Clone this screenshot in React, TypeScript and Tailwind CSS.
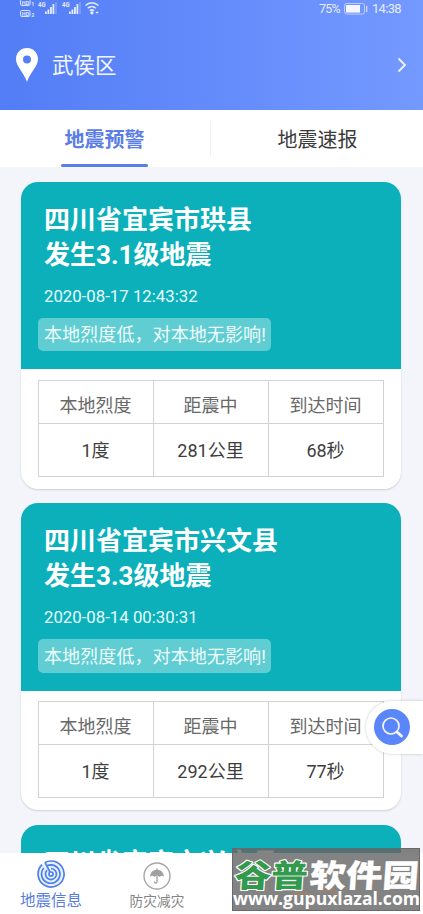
import React from "react";

type Quake = {
  place: string;
  level: string;
  time: string;
  distance: string;
  arrival: string;
};

const quakes: Quake[] = [
  { place: "四川省宜宾市珙县", level: "发生3.1级地震", time: "2020-08-17 12:43:32", distance: "281公里", arrival: "68秒" },
  { place: "四川省宜宾市兴文县", level: "发生3.3级地震", time: "2020-08-14 00:30:31", distance: "292公里", arrival: "77秒" },
];

function Signal() {
  return (
    <svg width="21" height="14" viewBox="0 0 21 14" fill="#e6ecff">
      <text x="0" y="6" fontSize="6.8" fontWeight="700" fontFamily="Roboto" textLength="7.5" lengthAdjust="spacingAndGlyphs">4G</text>
      <rect x="7" y="10.5" width="1.8" height="2.5" />
      <rect x="9.5" y="8.5" width="1.8" height="4.5" />
      <rect x="12" y="6" width="1.8" height="7" />
      <rect x="14.5" y="3" width="1.8" height="10" />
      <rect x="17.4" y="1" width="1.2" height="12" opacity=".35" />
    </svg>
  );
}

function HdMark() {
  return (
    <svg width="16" height="17" viewBox="0 0 16 17" fontFamily="Roboto" fontWeight="700">
      <g fill="none" stroke="#dce5ff" strokeWidth="1">
        <rect x=".5" y="-1" width="9.5" height="6.5" rx="1.2" />
        <rect x=".5" y="10.5" width="9.5" height="6" rx="1.2" />
      </g>
      <g fill="#dce5ff">
        <text x="1.8" y="4.7" fontSize="5.5">HD</text>
        <text x="1.8" y="15.7" fontSize="5.5">HD</text>
        <text x="11.2" y="5.6" fontSize="5.5">1</text>
        <text x="11.2" y="16.6" fontSize="5.5">2</text>
      </g>
    </svg>
  );
}

function StatusBar() {
  return (
    <div className="flex h-[18px] items-start justify-between pl-5 pr-[21px] text-[#e6ecff]">
      <div className="flex items-start">
        <HdMark />
        <div className="ml-[2px] flex gap-[3px] pt-[1px]">
          <Signal />
          <Signal />
        </div>
        <svg className="ml-[2px] mt-[1px]" width="15" height="14" viewBox="0 0 15 14" fill="none" stroke="#e6ecff" strokeWidth="1.5">
          <path d="M.5 4.500Q6.800 -1 13.500 4.500" />
          <path d="M2.700 7.300Q6.800 3.600 11 7.300" />
          <path d="M4.800 9.800Q6.800 8 9 9.800" />
          <circle cx="6.900" cy="11.800" r=".9" fill="#e6ecff" />
          <path d="M10.800 11.500h2.500" />
        </svg>
      </div>
      <div className="flex items-center text-[13px] leading-[17px]">
        <span className="inline-block w-[21px] whitespace-nowrap text-[12.5px] tracking-[-0.8px]">75%</span>
        <svg className="ml-[4px] mr-[4px]" width="24" height="12" viewBox="0 0 24 12">
          <rect x=".5" y=".5" width="20" height="10.6" rx="2" fill="none" stroke="#bccdff" />
          <rect x="2" y="2" width="14" height="7.6" fill="#f5f7ff" />
          <rect x="22" y="3" width="1.3" height="6" fill="#d2deff" />
        </svg>
        <span className="inline-block w-[30px] whitespace-nowrap tracking-[-0.7px]">14:38</span>
      </div>
    </div>
  );
}

function QuakeCard({ quake }: { quake: Quake }) {
  return (
    <article className="h-[307px] shrink-0 overflow-hidden rounded-[17px] bg-white shadow-[0_1px_2px_rgba(0,0,0,0.16)]">
      <div className="h-[187.5px] bg-[#0bb0ba] pl-[17px] pt-[21px] text-white">
        <h2 className="pl-[6px] text-[26px] font-bold leading-[35px]">
          {quake.place}
          <br />
          {quake.level}
        </h2>
        <p className="mt-[12px] pl-[6px] text-[16.8px] leading-[22px] text-[#e4fbfb]">{quake.time}</p>
        <div className="mt-[11px] flex h-[33.5px] w-[233px] items-center whitespace-nowrap rounded-[5px] bg-[#60cdd3] pl-[6px] pt-[2px] text-[18.1px] leading-[32px] text-[#effcfc]">
          本地烈度低，对本地无影响!
        </div>
      </div>
      <div className="px-[17px] pt-[10.5px]">
        <div className="grid h-[97px] grid-cols-3 grid-rows-[43px_53px] border-l border-t border-[#d2d2d2] text-center text-[18px] text-[#3e3e3e]">
          {["本地烈度", "距震中", "到达时间"].map((label) => (
            <div key={label} className="border-b border-r border-[#d2d2d2] pr-[1px] pt-[4px] leading-[42px] text-[#686868]">
              {label}
            </div>
          ))}
          {["1度", quake.distance, quake.arrival].map((value) => (
            <div key={value} className="border-b border-r border-[#d2d2d2] pr-[1px] leading-[53px]">
              {value}
            </div>
          ))}
        </div>
      </div>
    </article>
  );
}

export default function App() {
  return (
    <main className="relative flex h-[914px] w-[423px] flex-col overflow-hidden bg-[#f4f4fb] font-[Roboto,'Noto_Sans_CJK_SC',sans-serif]">
      <header className="h-[110px] shrink-0 bg-linear-to-r from-[#537df6] to-[#7499ff]">
        <StatusBar />
        <div className="flex h-[94px] items-center px-4 text-white">
          <svg width="22" height="34" viewBox="0 0 22 34">
            <path fill="#fff" fillRule="evenodd" d="M11 0C4.900 0 0 4.900 0 11c0 7.500 8 13.600 11 23 3-9.400 11-15.500 11-23C22 4.900 17.100 0 11 0Zm0 7.500a4 4 0 1 1 0 8 4 4 0 0 1 0-8Z" />
          </svg>
          <span className="ml-[14px] pt-[2px] text-[21.5px] leading-8 text-[#f3f6ff]">武侯区</span>
          <svg className="ml-auto" width="10" height="16" viewBox="0 0 10 16" fill="none" stroke="#f0f4ff" strokeWidth="1.8">
            <path d="m1.500 1.500 6.500 6.500-6.500 6.500" />
          </svg>
        </div>
      </header>

      <nav className="flex h-[57px] shrink-0 items-stretch bg-white text-[20px]">
        <div className="flex w-[210px] flex-col items-center justify-between pr-px pt-[15px] font-bold text-[#5a7ee5]">
          <span className="leading-[30px]">地震预警</span>
          <span className="h-[3px] w-[87px] rounded-full bg-[#5a7fe0]" />
        </div>
        <div className="my-[11px] w-px bg-[#f0f0f0]" />
        <div className="flex flex-1 justify-center pl-px pt-[15px] leading-[30px] text-[#3b3b3b]">地震速报</div>
      </nav>

      <section className="flex min-h-0 flex-1 flex-col gap-[14.5px] overflow-hidden pl-[21px] pr-[22px] pt-[14.5px]">
        {quakes.map((quake) => (
          <QuakeCard key={quake.time} quake={quake} />
        ))}
        <article className="h-[187px] shrink-0 rounded-t-[17px] bg-[#0bb0ba] pl-[23px] pt-[21px]">
          <h2 className="text-[26px] font-bold leading-[35px] text-white">四川省宜宾市兴文县</h2>
        </article>
      </section>

      <footer className="flex h-[61px] shrink-0 bg-white">
        <div className="flex w-[102px] flex-col items-center pt-[7px] text-[#587ddb]">
          <svg width="28" height="28" viewBox="0 0 28 28" fill="none" stroke="#4c80e8" strokeWidth="1.7">
            <path fill="#e8f0ff" d="M5 4.700A13 13 0 1 0 14 1Q10.500 1 8 2.400" />
            <path d="M8 2.400 14 14" />
            <path d="M6.800 8A9.200 9.200 0 1 0 14 4.800Q12 4.800 10 5.800M10 10.200A5.500 5.500 0 1 0 14 8.500" />
            <circle cx="14" cy="14" r="2" fill="#fff" />
          </svg>
          <span className="mt-[2px] text-[15.500px] leading-[23px]">地震信息</span>
        </div>
        <div className="flex w-[110px] flex-col items-center pt-[9px] text-[#858585]">
          <svg width="28" height="28" viewBox="0 0 28 28" fill="none" stroke="#a8a8a8" strokeWidth="1.400">
            <circle cx="14" cy="14" r="13" />
            <path fill="#a0a0a0" stroke="none" d="M13.300 6.500h1.400v1.200c3.500.3 6 3 6.300 7-1.500-1.200-3-1.200-4.300.2-1.600-1.500-3.800-1.500-5.400 0-1.300-1.400-2.800-1.400-4.300-.2.300-4 2.800-6.700 6.300-7Z" />
            <path d="M14 14v5.500q0 1.500-1.300 1.500t-1.300-1.500" />
          </svg>
          <span className="text-[13.700px] leading-[22px]">防灾减灾</span>
        </div>
      </footer>

      <button aria-label="搜索" className="absolute right-0 top-[701px] flex h-[53px] w-[57px] items-center rounded-l-full bg-white pb-px pl-[8px] shadow-[0_0_3px_rgba(0,0,0,0.22)]">
        <svg width="36" height="36" viewBox="0 0 36 36" fill="none" stroke="#f2f6ff">
          <circle cx="18" cy="18" r="18" fill="#5a86fa" stroke="none" />
          <circle cx="17" cy="17" r="8" strokeWidth="1.700" />
          <path d="m23 23 4.500 4" strokeWidth="3" strokeLinecap="round" />
        </svg>
      </button>

      <aside className="absolute left-[232px] top-[848px] h-[63px] w-[188px] border border-[#696969] bg-[#646464]/80">
        <svg width="186" height="61" viewBox="0 0 186 61" className="block overflow-visible">
          <g fill="none" stroke="#a5836f" strokeWidth="4" opacity=".55">
            <path d="M55 49q15-9 24 0M80 25q12-6 22 3M86 44q10-8 20 2" />
          </g>
          <g transform="translate(1 38) skewX(-4) scale(1 .87)" fontFamily="'Noto Sans CJK SC'" fontWeight="900" fontSize="36" strokeLinejoin="round" stroke="#fff" paintOrder="stroke">
            <text x="0" y="0" fill="#32994d" strokeWidth="2.500" textLength="73" lengthAdjust="spacingAndGlyphs">谷普</text>
            <text x="75" y="0" fill="#fff" strokeWidth=".3" textLength="109" lengthAdjust="spacingAndGlyphs">软件园</text>
          </g>
          <text x="0" y="56" fill="#fff" fontFamily="'Open Sans'" fontWeight="700" fontSize="18" textLength="187" lengthAdjust="spacingAndGlyphs">www.gupuxlazal.com</text>
        </svg>
      </aside>
    </main>
  );
}
